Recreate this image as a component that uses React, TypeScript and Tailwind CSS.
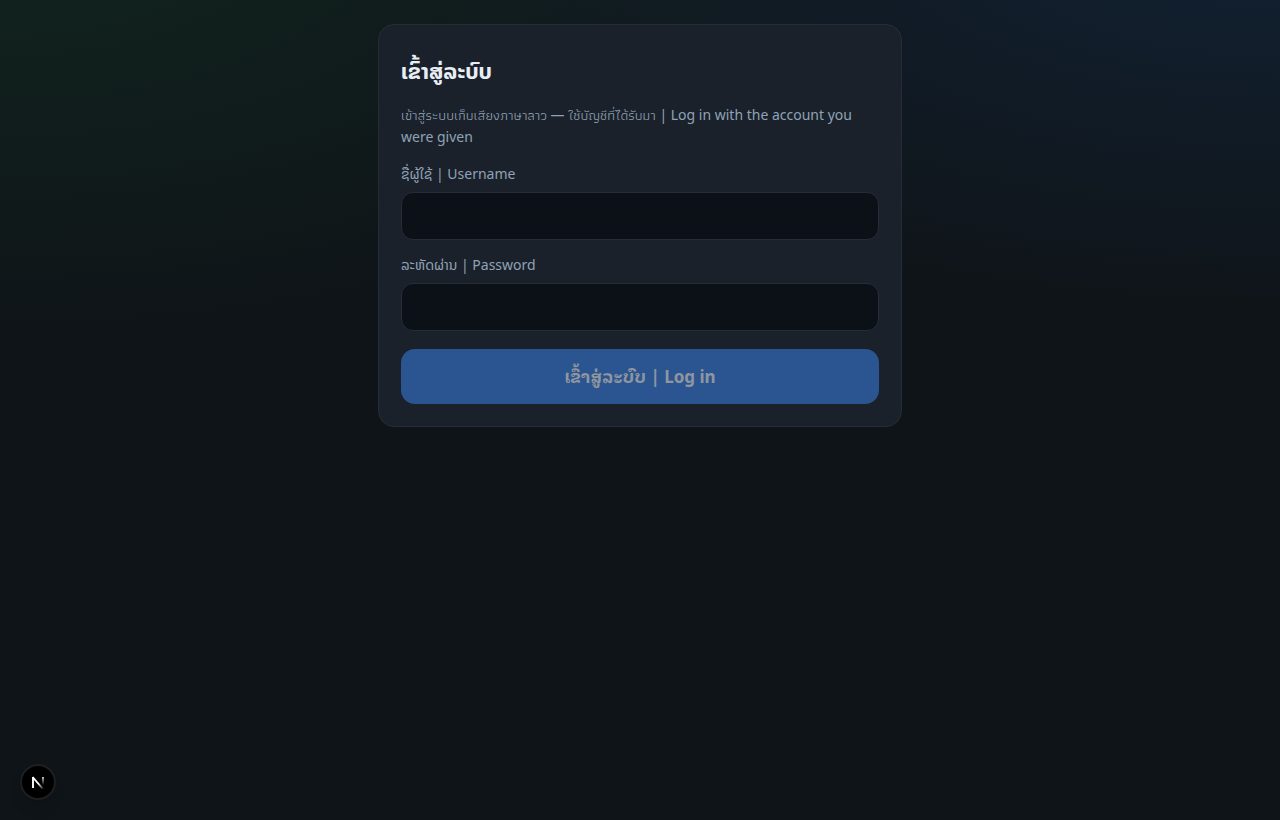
import React, { useState } from 'react';

type FieldProps = {
  id: string;
  label: string;
  type: string;
  value: string;
  onChange: (value: string) => void;
};

const Field: React.FC<FieldProps> = ({ id, label, type, value, onChange }) => {
  return (
    <div className="mb-3.5">
      <label htmlFor={id} className="block text-sm leading-[22px] mb-[7px] text-[#8fa3b8]">
        {label}
      </label>
      <input
        id={id}
        type={type}
        value={value}
        onChange={(e) => onChange(e.target.value)}
        className="block w-full h-12 px-3.5 text-base rounded-xl border border-[#262d38] bg-[#0c1118] text-[#e8eef5] outline-none focus:border-[#3b82f6]"
      />
    </div>
  );
};

const DevBadge: React.FC = () => {
  return (
    <button
      type="button"
      aria-label="Open Next.js Dev Tools"
      className="fixed left-5 bottom-5 w-9 h-9 rounded-full bg-black border-2 border-[#1d1f21] flex items-center justify-center shadow-lg"
    >
      <svg width="14" height="14" viewBox="0 0 14 14" fill="none">
        <defs>
          <linearGradient id="stem" x1="12" y1="1" x2="12" y2="10" gradientUnits="userSpaceOnUse">
            <stop stopColor="#fff" />
            <stop offset="1" stopColor="#fff" stopOpacity="0" />
          </linearGradient>
          <linearGradient id="diagonal" x1="8" y1="8" x2="13" y2="14" gradientUnits="userSpaceOnUse">
            <stop stopColor="#fff" />
            <stop offset="1" stopColor="#fff" stopOpacity="0" />
          </linearGradient>
        </defs>
        <path d="M2 13V2" stroke="#fff" strokeWidth="1.9" />
        <path d="M1.6 2L12 14" stroke="url(#diagonal)" strokeWidth="1.9" />
        <path d="M12 2V11" stroke="url(#stem)" strokeWidth="1.7" />
      </svg>
    </button>
  );
};

const App: React.FC = () => {
  const [username, setUsername] = useState('');
  const [password, setPassword] = useState('');

  return (
    <div className="min-h-screen bg-[#0f1418] bg-[radial-gradient(900px_400px_at_100%_-10%,#122234_0%,transparent_100%),radial-gradient(900px_420px_at_0%_-10%,#11251f_0%,transparent_100%)] text-[#e8eef5] font-['Noto_Sans_Lao','Noto_Sans',sans-serif]">
      <main className="max-w-[560px] mx-auto px-[18px] py-6">
        <form
          onSubmit={(e) => e.preventDefault()}
          className="rounded-2xl border border-[#262d38] bg-[#1b212a] p-[22px]"
        >
          <h1 className="text-[22px] leading-[34px] font-bold mt-[7px] mb-4">ເຂົ້າສູ່ລະບົບ</h1>
          <p className="text-sm leading-[22px] mb-[15px] text-[#8fa3b8] font-['Noto_Sans','Athiti','Noto_Sans_Thai',sans-serif]">
            เข้าสู่ระบบเก็บเสียงภาษาลาว — ใช้บัญชีที่ได้รับมา | Log in with the account you were given
          </p>

          <Field id="username" label="ຊື່ຜູ້ໃຊ້ | Username" type="text" value={username} onChange={setUsername} />
          <Field id="password" label="ລະຫັດຜ່ານ | Password" type="password" value={password} onChange={setPassword} />

          <button
            type="submit"
            disabled={!username || !password}
            className="block w-full h-[55px] mt-[18px] rounded-[14px] bg-[#3b82f6] text-[17px] font-bold text-white disabled:bg-[#2b5591] disabled:text-[#8f969f] font-['Noto_Sans','Noto_Sans_Lao_Looped',sans-serif]"
          >
            ເຂົ້າສູ່ລະບົບ | Log in
          </button>
        </form>
      </main>
      <DevBadge />
    </div>
  );
};

export default App;
